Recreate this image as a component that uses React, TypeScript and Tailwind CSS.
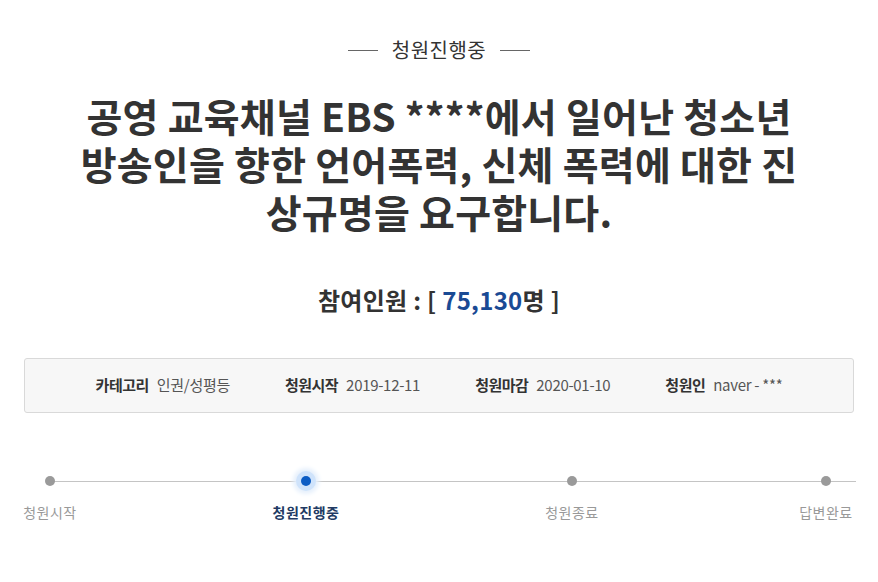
const FONT = { fontFamily: '"Noto Sans CJK KR", "Noto Sans", sans-serif' };

const INFO = [
    { label: "카테고리", value: "인권/성평등" },
    { label: "청원시작", value: "2019-12-11" },
    { label: "청원마감", value: "2020-01-10" },
    { label: "청원인", value: "naver - ***" },
];

const STEPS = [
    { name: "청원시작", active: false, ml: "" },
    { name: "청원진행중", active: true, ml: "ml-[196px]" },
    { name: "청원종료", active: false, ml: "ml-[206px]" },
    { name: "답변완료", active: false, ml: "ml-[194px]" },
];

export default function App() {
    return (
        <div className="w-[878px] h-[582px] bg-white text-[#333] pt-[36px]" style={FONT}>
            {/* Status header */}
            <div className="flex items-center justify-center gap-[14px] h-[28px]">
                <span className="w-[30px] h-px bg-[#666]" />
                <span className="text-[20px] leading-[28px] tracking-[0.5px] text-[#333]">청원진행중</span>
                <span className="w-[30px] h-px bg-[#666]" />
            </div>

            {/* Title */}
            <h1 className="mt-[27px] text-center text-[39px] leading-[48px] font-bold tracking-[0.2px] text-[#333]">
                <span className="block">공영 교육채널 EBS ****에서 일어난 청소년</span>
                <span className="block">방송인을 향한 언어폭력, 신체 폭력에 대한 진</span>
                <span className="block">상규명을 요구합니다.</span>
            </h1>

            {/* Participants */}
            <p className="mt-[49px] text-center text-[24px] leading-[32px] font-bold tracking-[0.3px] text-[#333]">
                참여인원 : [ <span className="text-[#1a4a94]">75,130</span>명 ]
            </p>

            {/* Info box */}
            <div className="mx-6 mt-[42px] h-[55px] bg-[#f7f7f7] border border-[#d9d9d9] rounded-[3px] flex items-center justify-center gap-[55px] text-[15px]">
                {INFO.map((item) => (
                    <div key={item.label} className="flex items-center gap-[8px]">
                        <span className="font-bold text-[#333] tracking-[-0.5px]">{item.label}</span>
                        <span className="text-[#555] tracking-[-0.3px]">{item.value}</span>
                    </div>
                ))}
            </div>

            {/* Progress steps */}
            <div className="relative mt-[58px] ml-5 flex">
                <div className="absolute left-[30px] right-[22px] top-[10px] h-px bg-[#c4c4c4]" />
                {STEPS.map((step) => (
                    <div key={step.name} className={`relative w-[60px] flex flex-col items-center ${step.ml}`}>
                        <div className="h-[20px] flex items-center justify-center">
                            {step.active ? (
                                <span className="w-[20px] h-[20px] rounded-full bg-[#cfe3fb] shadow-[0_0_4px_3px_#e6f0fc] flex items-center justify-center">
                                    <span className="w-[10px] h-[10px] rounded-full bg-[#0b5cc4]" />
                                </span>
                            ) : (
                                <span className="w-[10px] h-[10px] rounded-full bg-[#9a9a9a]" />
                            )}
                        </div>
                        <span
                            className={`mt-[11px] text-[14px] leading-[20px] whitespace-nowrap tracking-[0.5px] ${
                                step.active ? "font-bold text-[#213a63]" : "text-[#999]"
                            }`}
                        >
                            {step.name}
                        </span>
                    </div>
                ))}
            </div>
        </div>
    );
}
